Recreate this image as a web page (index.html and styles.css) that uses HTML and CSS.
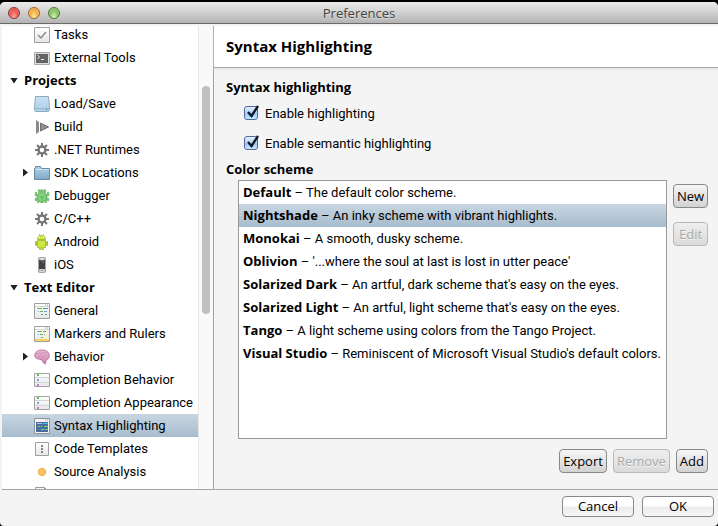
FILE: index.html
```html
<!DOCTYPE html>
<html lang="en">
<head>
<meta charset="utf-8">
<title>Preferences</title>
<link rel="stylesheet" href="styles.css">
</head>
<body>
<svg class="defs" aria-hidden="true">
  <defs>
    <linearGradient id="paper" x2="0" y2="1"><stop stop-color="#fff"/><stop offset="1" stop-color="#e6e6e6"/></linearGradient>
    <linearGradient id="blue" x2="0" y2="1"><stop stop-color="#b4d2e6"/><stop offset="1" stop-color="#7fa8c6"/></linearGradient>
    <linearGradient id="disk" x2="0" y2="1"><stop stop-color="#c8e1f4"/><stop offset="1" stop-color="#aacfe9"/></linearGradient>
    <linearGradient id="pink" x2="0" y2="1"><stop stop-color="#eab8d4"/><stop offset="1" stop-color="#c982ac"/></linearGradient>
    <linearGradient id="metal" x2="1" y2="0"><stop stop-color="#aaa"/><stop offset=".5" stop-color="#f0f0f0"/><stop offset="1" stop-color="#aaa"/></linearGradient>
    <symbol id="gear" viewBox="0 0 16 16">
      <g stroke="#777" stroke-width="2"><path d="M8 1v14M1 8h14M3 3l10 10M13 3L3 13"/></g>
      <circle cx="8" cy="8" r="3.5" fill="#fff" stroke="#777" stroke-width="2.4"/>
    </symbol>
    <symbol id="list" viewBox="0 0 16 16">
      <path d="M.5 1.500h15v13H.5z" fill="url(#paper)" stroke="#a2a2a2"/>
      <path d="M1 5.500h14M1 10.500h14" stroke="#d4d4d4"/>
      <path d="M3 2h2v2H3z" fill="#63b75c"/><path d="M3 7h2v2H3z" fill="#72a4e6"/><path d="M3 12h2v2H3z" fill="#c47ed0"/>
    </symbol>
  </defs>
</svg>
<div class="window">
  <header class="titlebar">
    <div class="lights"><i class="light red"></i><i class="light amber"></i><i class="light green"></i></div>
    <h1>Preferences</h1>
  </header>
  <div class="body">
    <nav class="tree" aria-label="Preference sections">
      <div class="rows">
        <a href="#" class="row"><svg class="icon" viewBox="0 0 16 16"><path d="M.5.5h15v15H.5z" fill="url(#paper)" stroke="#a0a0a0"/><path d="M4 8l3 3 5-6" fill="none" stroke="#8c8c8c" stroke-width="1.500"/></svg>Tasks</a>
        <a href="#" class="row"><svg class="icon" viewBox="0 0 16 16"><path d="M.5 2.500h15v12H.5z" fill="#ddd" stroke="#aaa"/><path d="M2 4h12v9H2z" fill="#646464"/><path d="M3.500 5l2 2-2 2M7 9.500h3" fill="none" stroke="#eee"/></svg>External Tools</a>
        <a href="#" class="row group"><i class="arrow down"></i>Projects</a>
        <a href="#" class="row"><svg class="icon" viewBox="0 0 16 16"><path d="M1.500.5h13l1 11v3l-1 1h-13l-1-1v-3z" fill="url(#disk)" stroke="#8eaabd"/><path d="M1 12.500h14" stroke="#91b7d2"/><path d="M12 13.500h1" stroke="#476c8a"/></svg>Load/Save</a>
        <a href="#" class="row"><svg class="icon" viewBox="0 0 16 16"><path d="M2 1l3 2v10l-3 2z" fill="#8a8a8a"/><path d="M6.500 4l8 4-8 4z" fill="#909090" stroke="#6e6e6e"/></svg>Build</a>
        <a href="#" class="row"><svg class="icon"><use href="#gear"/></svg>.NET Runtimes</a>
        <a href="#" class="row nested"><i class="arrow right"></i><svg class="icon" viewBox="0 0 16 16"><path d="M.5 14.500V3.500h1v-2h5l1 2h8v11z" fill="url(#blue)" stroke="#678aa5"/><path d="M1 4.500h14" stroke="#c8e0ef"/></svg>SDK Locations</a>
        <a href="#" class="row"><svg class="icon" viewBox="0 0 16 16"><g fill="none" stroke="#7cc47a" stroke-width="2.500" stroke-linecap="round" stroke-linejoin="round"><path d="M5 8L2 7V5M11 8l3-1V5M5 10l-3 1v1M11 10l3 1v1M6 6L5 2.500M10 6l1-3.500M5 12l-1 2M11 12l1 2"/></g><ellipse cx="8" cy="9" rx="4.500" ry="5.500" fill="#86d07c" stroke="#66b265"/><path d="M5 5c0-5 6-5 6 0z" fill="#77c371"/><path d="M6 8l2 2 2-2M8 10v4" stroke="#62ad62" fill="none"/></svg>Debugger</a>
        <a href="#" class="row"><svg class="icon"><use href="#gear"/></svg>C/C++</a>
        <a href="#" class="row"><svg class="icon" viewBox="0 0 16 16"><g fill="#cdea3c" stroke="#a9bd48"><path d="M3.500 6.500h8v7h-2v2h-1.500v-2h-1v2H5.500v-2h-2z"/><path d="M3.500 5.500c0-5.500 8-5.500 8 0z"/><path d="M1.500 7.500h1v4h-1zM12.500 7.500h1v4h-1z"/><path d="M5 0l1 1.500M10 0L9 1.500"/></g><path d="M5 3.500h1M9 3.500h1" stroke="#fff"/></svg>Android</a>
        <a href="#" class="row"><svg class="icon" viewBox="0 0 16 16"><rect x="4.500" y=".5" width="7" height="15" rx="1" fill="url(#metal)" stroke="#a4a4a4"/><path d="M5 3h6v9H5z" fill="#3e4348"/><path d="M6 3h4v4z" fill="#666"/><path d="M7 13.500h2" stroke="#888"/></svg>iOS</a>
        <a href="#" class="row group"><i class="arrow down"></i>Text Editor</a>
        <a href="#" class="row"><svg class="icon" viewBox="0 0 16 16"><path d="M.5.5h15v15H.5z" fill="url(#paper)" stroke="#a0a0a0"/><path d="M1 3.500h14" stroke="#d5d5d5"/><path d="M11 2h1M13 2h1" stroke="#999"/><path d="M3 5.500h5M6 8.500h3M7 11.500h2" stroke="#64b94d"/><path d="M9 5.500h5M11 11.500h2" stroke="#4a9ba8"/><path d="M4 8.500h1M10 8.500h3" stroke="#7197e6"/></svg>General</a>
        <a href="#" class="row"><svg class="icon" viewBox="0 0 16 16"><path d="M.5.5h15v15H.5z" fill="url(#paper)" stroke="#a0a0a0"/><path d="M1 3.500h14" stroke="#d5d5d5"/><path d="M11 2h1M13 2h1" stroke="#999"/><path d="M12 4h2v9h-2z" fill="#fbf3c4"/><path d="M1 13h14v2H1z" fill="#ffd060"/><path d="M3 5.500h5M6 8.500h3M7 11.500h2" stroke="#64b94d"/><path d="M9 5.500h3" stroke="#4a9ba8"/><path d="M4 8.500h1M10 8.500h1" stroke="#7197e6"/></svg>Markers and Rulers</a>
        <a href="#" class="row nested"><i class="arrow right"></i><svg class="icon" viewBox="0 0 16 16"><path d="M1 5C2 2 5 1 8 1s6 1 7 4c1 3-1 6-3 6l-.5 4-2-1-1.500-3-3-1c-3 0-5-2-4-5z" fill="url(#pink)" stroke="#bd7da3"/><path d="M3 5c2-2 3 1 5-1s3 1 5-1M4 8c2-2 4 1 8-2" fill="none" stroke="#d192b7"/></svg>Behavior</a>
        <a href="#" class="row"><svg class="icon"><use href="#list"/></svg>Completion Behavior</a>
        <a href="#" class="row"><svg class="icon"><use href="#list"/></svg>Completion Appearance</a>
        <a href="#" class="row selected" aria-current="page"><svg class="icon" viewBox="0 0 16 16"><path d="M.5.5h15v15H.5z" fill="#f3f3f3" stroke="#8e969d"/><path d="M11 2h1M13 2h1" stroke="#999"/><path d="M2 4h12v10H2z" fill="#4e6ba0"/><path d="M3 5.500h5M7 8.500h1" stroke="#a9c6ed"/><path d="M9 5.500h5" stroke="#30cce0"/><path d="M4 8.500h2M10 8.500h4M7 11.500h3" stroke="#68e75b"/><path d="M11 11.500h3" stroke="#5bd68f"/></svg>Syntax Highlighting</a>
        <a href="#" class="row"><svg class="icon" viewBox="0 0 16 16"><path d="M1.500 1.500h13v13h-13z" fill="url(#paper)" stroke="#a0a0a0"/><path d="M7 4h2v2H7zM7 7h2v2H7zM7 10h2v2H7z" fill="#858585"/></svg>Code Templates</a>
        <a href="#" class="row"><svg class="icon" viewBox="0 0 16 16"><circle cx="8" cy="8" r="3.700" fill="#fbc464" stroke="#eeaa43"/></svg>Source Analysis</a>
        <a href="#" class="row" aria-label="More"><svg class="icon" viewBox="0 0 16 16"><path d="M1.500.5h9l3 3v12h-12z" fill="url(#paper)" stroke="#999"/><path d="M10.500.5v3h3" fill="none" stroke="#999"/></svg></a>
      </div>
      <div class="track"><div class="thumb"></div></div>
    </nav>
    <main class="panel">
      <h2>Syntax Highlighting</h2>
      <div class="settings">
        <h3>Syntax highlighting</h3>
        <label class="check"><span class="box"><input type="checkbox" checked><svg viewBox="0 0 16 17"><path d="M4 8l3.500 4L14 2" /></svg></span>Enable highlighting</label>
        <label class="check"><span class="box"><input type="checkbox" checked><svg viewBox="0 0 16 17"><path d="M4 8l3.500 4L14 2" /></svg></span>Enable semantic highlighting</label>
        <h3 id="scheme">Color scheme</h3>
        <div class="schemes">
          <ul role="listbox" aria-labelledby="scheme">
            <li role="option"><b>Default</b> – The default color scheme.</li>
            <li role="option" class="selected" aria-selected="true"><b>Nightshade</b> – An inky scheme with vibrant highlights.</li>
            <li role="option"><b>Monokai</b> – A smooth, dusky scheme.</li>
            <li role="option"><b>Oblivion</b> – '...where the soul at last is lost in utter peace'</li>
            <li role="option"><b>Solarized Dark</b> – An artful, dark scheme that's easy on the eyes.</li>
            <li role="option"><b>Solarized Light</b> – An artful, light scheme that's easy on the eyes.</li>
            <li role="option"><b>Tango</b> – A light scheme using colors from the Tango Project.</li>
            <li role="option"><b>Visual Studio</b> – Reminiscent of Microsoft Visual Studio's default colors.</li>
          </ul>
          <div class="side"><button type="button">New</button><button type="button" disabled>Edit</button></div>
        </div>
        <div class="actions"><button type="button">Export</button><button type="button" disabled>Remove</button><button type="button">Add</button></div>
      </div>
    </main>
  </div>
  <footer><button type="button">Cancel</button><button type="button">OK</button></footer>
</div>
</body>
</html>
```
FILE: styles.css
```css
* { box-sizing: border-box; }

body {
  margin: 0;
  padding-top: 2px;
  height: 100vh;
  background: #000;
  color: #000;
  font: 13px/23px Roboto, "Noto Sans", sans-serif;
  overflow: hidden;
}

h1, h2, h3, ul { margin: 0; padding: 0; font-size: 13px; }
h1, h2, h3, b, .group, button { font-family: "Open Sans", "Noto Sans", sans-serif; }
.defs { position: absolute; width: 0; height: 0; }

.window {
  display: flex;
  flex-direction: column;
  height: 100%;
  background: #f4f4f4;
  border-radius: 5px 5px 4px 4px;
  overflow: hidden;
}

.titlebar {
  display: grid;
  grid-template-columns: 1fr auto 1fr;
  align-items: center;
  height: 22px;
  flex: none;
  padding: 0 8px;
  background: linear-gradient(#ececec, #b4b4b4);
  border-bottom: 1px solid #6a6a6a;
}
.titlebar h1 { font-weight: 400; color: #444; text-shadow: 0 1px #ddd; line-height: 20px; }

.lights { display: flex; gap: 8px; }
.light { width: 12px; height: 12px; border-radius: 50%; border: 1px solid; }
.red { background: radial-gradient(ellipse at 50% 100%, #ffb0a5, #e8564f 60%, #f5a5a0); border-color: #8d3331; }
.amber { background: radial-gradient(ellipse at 50% 100%, #fff1a5, #f1aa45 60%, #f8d69c); border-color: #9a662b; }
.green { background: radial-gradient(ellipse at 50% 100%, #dcffb0, #83be62 60%, #c2e2b0); border-color: #4c7637; }

.body {
  display: grid;
  grid-template-columns: 213px 1fr;
  flex: 1;
  min-height: 0;
  padding-top: 2px;
}

.tree {
  display: grid;
  grid-template-columns: 1fr 15px;
  margin-left: 2px;
  min-height: 0;
  overflow: hidden;
  background: #fff;
}
.rows { margin-top: -3px; min-width: 0; }
.row {
  position: relative;
  display: flex;
  align-items: center;
  gap: 4px;
  height: 23px;
  padding-left: 32px;
  color: inherit;
  text-decoration: none;
  white-space: nowrap;
}
.group { padding-left: 8px; gap: 6px; font-weight: 700; }
.nested { padding-left: 21px; }
.nested .arrow { margin-right: 2px; }
.selected { background: linear-gradient(#c8d6e2, #a7bccd); }
.icon { width: 16px; height: 16px; flex: none; }

.arrow { flex: none; background: #222; }
.down { width: 8px; height: 6px; clip-path: polygon(0 0, 100% 0, 50% 100%); }
.right { width: 5px; height: 8px; clip-path: polygon(0 0, 100% 50%, 0 100%); }

.track {
  display: grid;
  grid-template-rows: 58fr 220fr 185fr;
  padding: 0 3px;
  background: #f9f9f9;
  border-left: 1px solid #e8e8e8;
}
.thumb { grid-row: 2; border-radius: 4px; background: #c0c0c0; }

.panel {
  display: flex;
  flex-direction: column;
  min-width: 0;
  border-left: 1px solid #a0a0a0;
}
.panel h2 {
  height: 42px;
  padding-left: 12px;
  font-size: 15px;
  line-height: 40px;
  background: #fff;
  border-bottom: 1px solid #a9a9a9;
  box-shadow: 0 1px 2px #ddd;
}
.settings {
  display: flex;
  flex-direction: column;
  flex: 1;
  min-height: 0;
  padding: 8px 10px 16px 12px;
}

.check { display: flex; align-items: center; gap: 5px; height: 30px; padding-left: 18px; }
.settings h3 { height: 22px; line-height: 22px; }
.box { position: relative; display: flex; }
.box input {
  appearance: none;
  width: 14px;
  height: 14px;
  margin: 0 2px 0 0;
  border: 1px solid #5466a0;
  border-radius: 3px;
  background: linear-gradient(#e5f1fb, #a2ccf2 60%, #c5ebff);
}
.box svg { position: absolute; left: 0; top: -2px; width: 16px; height: 17px; }
.box path { fill: none; stroke: #10182c; stroke-width: 2.4; }

.schemes { display: flex; flex: 1; min-height: 0; gap: 6px; padding-left: 12px; }
.schemes ul { flex: 1; min-width: 0; list-style: none; background: #fff; border: 1px solid #999; }
.schemes li { height: 23px; line-height: 22px; padding-left: 4px; white-space: nowrap; }
.side { display: flex; flex-direction: column; gap: 14px; padding-top: 4px; }
.side button { width: 35px; }
.actions { display: flex; justify-content: flex-end; gap: 6px; padding-top: 10px; }

button {
  height: 24px;
  padding: 0 3px;
  font-size: 13px;
  line-height: 22px;
  color: #000;
  border: 1px solid #888;
  border-radius: 4px;
  background: linear-gradient(#f6f6f6, #d2d2d2);
}
button:disabled { color: #a9a9a9; border-color: #b8b8b8; background: linear-gradient(#efefef, #dadada); text-shadow: 0 1px #f6f6f6; }

footer {
  display: flex;
  justify-content: flex-end;
  gap: 8px;
  flex: none;
  height: 37px;
  margin-left: 2px;
  padding: 6px 4px 0;
  border-top: 1px solid #a5a5a5;
}
footer button { width: 72px; height: 21px; line-height: 19px; background: linear-gradient(#fff 45%, #ececec 55%, #f8f8f8); }
```
